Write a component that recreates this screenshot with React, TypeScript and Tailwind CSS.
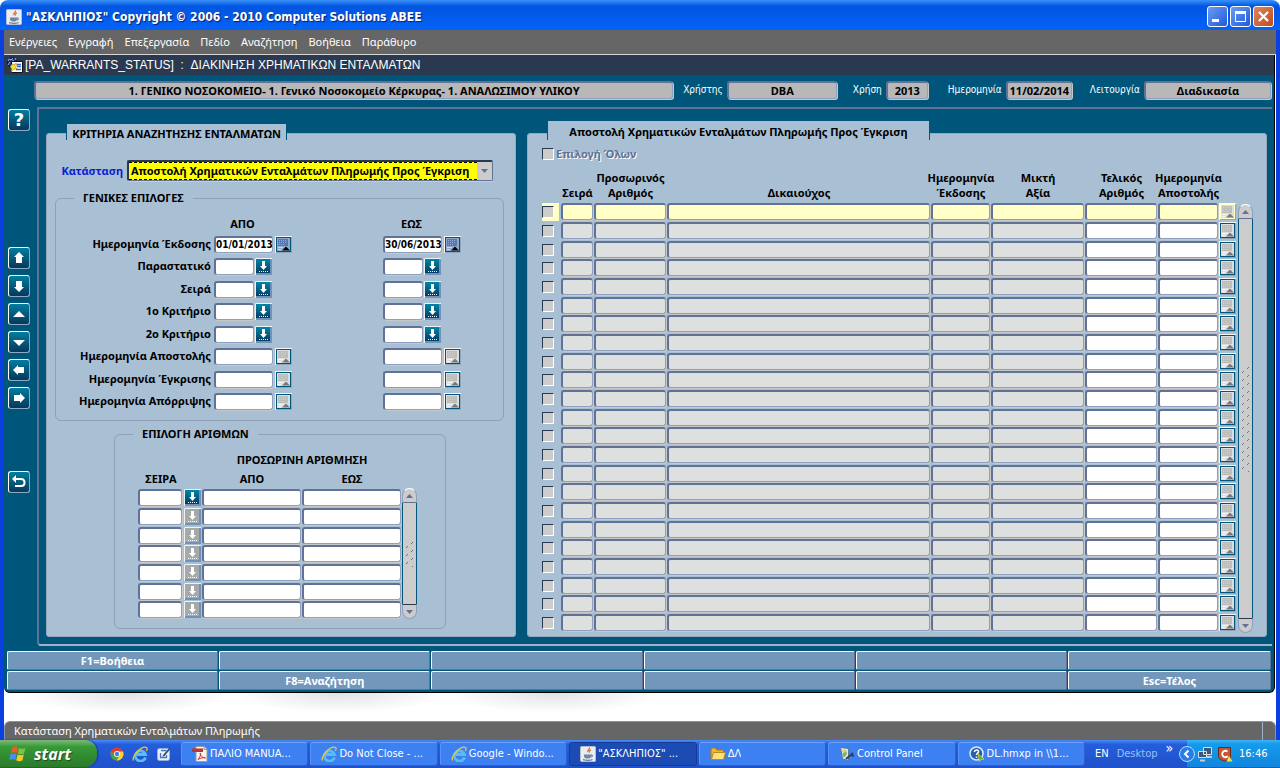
import React from "react";

type FilterRow = {
  id: string;
  label: string;
  kind: "date" | "list";
  from?: string;
  to?: string;
  active?: boolean;
};

const menuItems = ["Ενέργειες", "Εγγραφή", "Επεξεργασία", "Πεδίο", "Αναζήτηση", "Βοήθεια", "Παράθυρο"];

const filterRows: FilterRow[] = [
  { id: "issue", label: "Ημερομηνία Έκδοσης", kind: "date", from: "01/01/2013", to: "30/06/2013", active: true },
  { id: "document", label: "Παραστατικό", kind: "list" },
  { id: "series", label: "Σειρά", kind: "list" },
  { id: "criterion1", label: "1ο Κριτήριο", kind: "list" },
  { id: "criterion2", label: "2ο Κριτήριο", kind: "list" },
  { id: "sent", label: "Ημερομηνία Αποστολής", kind: "date" },
  { id: "approved", label: "Ημερομηνία Έγκρισης", kind: "date" },
  { id: "rejected", label: "Ημερομηνία Απόρριψης", kind: "date" },
];

const numberRows = Array.from({ length: 7 }, (_, i) => i);
const warrantRows = Array.from({ length: 23 }, (_, i) => i);

const warrantColumns = [
  { title: "Σειρά", width: "w-[33px]", editable: false },
  { title: "Προσωρινός Αριθμός", width: "w-[73px]", editable: false },
  { title: "Δικαιούχος", width: "", editable: false },
  { title: "Ημερομηνία Έκδοσης", width: "w-[60px]", editable: false },
  { title: "Μικτή Αξία", width: "w-[94px]", editable: false },
  { title: "Τελικός Αριθμός", width: "w-[73px]", editable: true },
  { title: "Ημερομηνία Αποστολής", width: "w-[61px]", editable: true },
];

const functionKeys = ["F1=Βοήθεια", "", "", "", "", "", "", "F8=Αναζήτηση", "", "", "", "Esc=Τέλος"];

const condensed = "font-['DejaVu_Sans_Condensed','DejaVu_Sans',sans-serif]";

const fieldEdge =
  "block border-t-2 border-l-2 border-r border-b border-t-[#607396] border-l-[#607396] border-r-[#8fa0bd] border-b-[#8fa0bd] rounded-[3px] shadow-[1px_1px_0_#c8c8c8] outline-none";

/* ---------- icons ---------- */

const JavaIcon = () => (
  <svg width="16" height="16" viewBox="0 0 16 16" className="shrink-0">
    <rect x="0.5" y="0.5" width="15" height="15" rx="1" fill="#e9edf2" stroke="#b6c0cc" />
    <path d="M9.500 1.500c1 1.600-2.800 2.600-1.600 4.600M11 4c-1.500.6-2.200 1.300-1.500 2.600" fill="none" stroke="#e0662a" strokeWidth="1.200" />
    <path d="M4 8.500h7v1.500c0 2-1.500 2.500-3.500 2.500S4 12 4 10z" fill="#6f86a3" />
    <path d="M11 9c2-.5 2 2 0 2M3 13.700c3 .8 7 .8 9.500 0" fill="none" stroke="#47617f" />
  </svg>
);

const FormIcon = () => (
  <svg width="16" height="16" viewBox="0 0 16 16" className="shrink-0">
    <circle cx="5.500" cy="5.500" r="5" fill="#1d2f70" stroke="#0b1730" />
    <path d="M1 4l1-2 2 1 2-2M8 1l1 2M1 8l2-3M5 3l2 1" fill="none" stroke="#8fb3e8" />
    <path d="M4.500 4.500h11v11h-11z" fill="#fff" stroke="#111" />
    <path d="M10 7.500h4M10 9.500h4M9 12.500h5" stroke="#3a62d8" strokeWidth="1.400" />
    <path d="M5 7l3 .5 1-1.500 1 2.500L8.500 10 10 12l-3 0-3 3 .5-3.500L3 10z" fill="#f7dc3c" stroke="#836a00" strokeWidth=".5" />
  </svg>
);

const CalendarIcon = ({ active, hot }: { active?: boolean; hot?: boolean }) => (
  <svg width="17" height="17" viewBox="0 0 17 17" className="block">
    <path d="M0 0h17v17H0z" fill="#8fa6bf" />
    <path d="M0 0h17v1H1v16H0z" fill={hot ? "#ffffe0" : "#f4f7f9"} />
    <path d="M1 1h15v15H1z" fill={hot ? "#ffffc6" : "#00567a"} />
    <path d="M2 2h13v13H2z" fill={active ? "#8fa9c6" : "#dedede"} />
    <path d="M3 3h10v7H3z" fill={active ? "#5679b4" : "#bdbdbb"} />
    <path d="M4 4.500h1m1 0h1m1 0h1m1 0h1M4 6.500h1m1 0h1m1 0h1m1 0h1M4 8.500h1m1 0h1m1 0h1" stroke={active ? "#8fabd6" : "#cfcfcd"} />
    <path d="M3 11.500h5M3 13.500h3" stroke={active ? "#c8d6e6" : "#f6f6f6"} />
    <path d="M7 14.500l4-4 4 4z" fill={active ? "#000" : "#7c7878"} />
  </svg>
);

const ListIcon = ({ active }: { active?: boolean }) => (
  <svg width="17" height="17" viewBox="0 0 17 17" className="block">
    <defs>
      <linearGradient id="listBlue" x1="0" y1="0" x2="0" y2="1">
        <stop offset="0" stopColor="#0086a8" />
        <stop offset="1" stopColor="#023c62" />
      </linearGradient>
    </defs>
    <path d="M0 0h17v17H0z" fill="#7092b8" />
    <path d="M.5 17V.5H17" fill="none" stroke="#eef3f7" />
    <path d="M1 1h14v14H1z" fill={active ? "url(#listBlue)" : "#a5aaa8"} />
    <path d="M7 3h3v5h2l-3.500 4L5 8h2z" fill="#fff" />
    <path d="M4 13.500h9" stroke="#fff" strokeDasharray="1 1" />
  </svg>
);

const InternetIcon = () => (
  <svg width="16" height="16" viewBox="0 0 16 16" className="shrink-0">
    <path d="M13.500 11.500A5.200 5.200 0 1 1 13.500 8.500H5" fill="none" stroke="#58bdf5" strokeWidth="2.800" />
    <path d="M1.500 14.500C-.5 11 9-.5 14.500 1.500c1 .6.6 2.200-.2 3.300" fill="none" stroke="#f6c531" strokeWidth="1.300" />
  </svg>
);

const ChromeIcon = () => (
  <svg width="14" height="14" viewBox="0 0 14 14">
    <circle cx="7" cy="7" r="6.500" fill="#e23b2e" />
    <path d="M1.300 4A6.500 6.500 0 0 0 6.500 13.500L9.500 8.500H4.500z" fill="#3fa648" />
    <path d="M13 4.500A6.500 6.500 0 0 1 6.500 13.500l3.500-5.500-1-3.500z" fill="#fbd331" />
    <circle cx="7" cy="7" r="3" fill="#fff" />
    <circle cx="7" cy="7" r="2.200" fill="#3f7de0" />
  </svg>
);

const DesktopIcon = () => (
  <svg width="16" height="16" viewBox="0 0 16 16">
    <rect x="1.500" y="2.500" width="12" height="12" rx="2" fill="#e9f1fb" stroke="#8fb2de" />
    <path d="M5 4.500h5.500M4.500 7v4.500h6V9" fill="none" stroke="#4a78b8" strokeWidth="1.300" />
    <path d="M7 9l6-7 1.500 1-6 7-2 .5z" fill="#37506f" />
  </svg>
);

const PdfIcon = () => (
  <svg width="16" height="16" viewBox="0 0 16 16" className="shrink-0">
    <path d="M4 .5h8l3 3v12H4z" fill="#f7f4f2" stroke="#a09a98" />
    <path d="M12 .5v3h3" fill="#dcd6d4" stroke="#a09a98" />
    <path d="M0 2.500h11v3.500H0z" fill="#b5392c" />
    <path d="M6 13.500c2-2 3-5 2.500-6.500-.8 0-.5 4 5 5-2-.8-5 0-7.500 1.500z" fill="none" stroke="#c0392b" />
  </svg>
);

const FolderIcon = () => (
  <svg width="16" height="16" viewBox="0 0 16 16" className="shrink-0">
    <path d="M1 3.500Q1 2 2.500 2h3L7 4h6.500v9.500H1z" fill="#f0b52e" stroke="#a8761a" />
    <path d="M1.500 13.500L3.500 6.500h12l-2 7z" fill="#fde27a" stroke="#b98a20" />
  </svg>
);

const ControlIcon = () => (
  <svg width="16" height="16" viewBox="0 0 16 16" className="shrink-0">
    <path d="M1.500 1.500l8 1v12l-6-1.500z" fill="#dbe9f8" stroke="#55789f" />
    <path d="M3 8l4-4 1 4-3 4z" fill="#7db36b" />
    <circle cx="5" cy="5" r="1.800" fill="#f5cf3e" />
    <path d="M7 13l7-6M12 9l3 1" stroke="#33435c" strokeWidth="2" />
  </svg>
);

const HelpFileIcon = () => (
  <svg width="16" height="16" viewBox="0 0 16 16" className="shrink-0">
    <circle cx="7.500" cy="7.500" r="6.500" fill="#2b5fae" stroke="#dfe9f5" strokeWidth="1.500" />
    <path d="M5.500 6c0-3 4.500-2.500 4 0-.3 1.200-2 1.300-2 3M7.500 10.500v1.500" fill="none" stroke="#fff" strokeWidth="1.500" />
    <path d="M9 8l6 5-3 .4-1.500 2z" fill="#4fae3a" stroke="#e7e04b" strokeWidth=".7" />
  </svg>
);

const WindowsFlag = () => (
  <svg width="19" height="18" viewBox="0 0 19 18">
    <path d="M3 2.500c2-1.200 4-1.200 6-.2L7.800 8c-2-1-4-.9-6 .2z" fill="#ef5a2a" />
    <path d="M10 3c2 1 4 1 6.500 0L15 8.600c-2 1-4 1-6.200-.1z" fill="#7fc241" />
    <path d="M1.500 9.200c2-1 4-1.100 6-.2L6.300 15c-2-1-4-.9-6 .2z" fill="#4d8df0" />
    <path d="M8.600 9.600c2 1 4 1 6.200 0l-1.500 5.800c-2 1-4 1-6-.1z" fill="#fcc62d" />
  </svg>
);

/* ---------- small parts ---------- */

const toolPaths: Record<string, string> = {
  up: "M10 4l5 5h-2v6H7V9H5z",
  down: "M10 16l-5-5h2V5h6v6h2z",
  first: "M10 7l6 6H4z",
  last: "M10 14L4 8h12z",
  left: "M4 10l5-5v2h6v6H9v2z",
  right: "M16 10l-5-5v2H5v6h6v2z",
};

const ToolButton = ({ name, children }: { name: string; children?: React.ReactNode }) => (
  <button
    aria-label={name}
    className="flex h-[22px] w-[22px] items-center justify-center rounded-[3px] border border-t-white border-l-white border-r-[#8fa9c2] border-b-[#8fa9c2] bg-linear-to-b from-[#007d9e] to-[#06395c] text-white"
  >
    {children ?? (
      <svg width="20" height="20" viewBox="0 0 20 20" className="shrink-0">
        <path d={toolPaths[name]} fill="#fff" />
      </svg>
    )}
  </button>
);

const InfoField = ({ label, value, className }: { label: string; value: string; className: string }) => (
  <label className="flex items-center gap-1 whitespace-nowrap text-white">
    <span className={`${condensed} text-[10px]`}>{label}</span>
    <input
      readOnly
      defaultValue={value}
      className={`${fieldEdge} h-[18px] bg-[#b8b8b8] text-center font-bold text-black ${className}`}
    />
  </label>
);

const Grip = ({ id, height }: { id: string; height: number }) => (
  <svg width="8" height={height}>
    <pattern id={id} width="8" height="8" patternUnits="userSpaceOnUse">
      <path d="M5 3l2-2M0 7l2-2" stroke="#607396" />
    </pattern>
    <rect width="8" height={height} fill={`url(#${id})`} />
  </svg>
);

const ScrollBar = ({ id, className, grip }: { id: string; className: string; grip: number }) => (
  <div className={`flex w-[15px] flex-col ${className}`}>
    <button
      aria-label="Πάνω"
      className="flex h-[15px] items-center justify-center rounded-t-full border border-[#8fa0b8] border-t-white border-b-[#607396] bg-[#ccc]"
    >
      <svg width="7" height="4" viewBox="0 0 7 4">
        <path d="M0 4l3.500-4L7 4z" fill="#607396" />
      </svg>
    </button>
    <div className="flex flex-1 items-center justify-center border-x border-[#00567a] bg-[#ccc]">
      <Grip id={`${id}-grip`} height={grip} />
    </div>
    <button
      aria-label="Κάτω"
      className="flex h-[15px] items-center justify-center rounded-b-full border border-[#8fa0b8] border-t-[#2a3950] bg-[#ccc]"
    >
      <svg width="7" height="4" viewBox="0 0 7 4">
        <path d="M0 0l3.500 4L7 0z" fill="#607396" />
      </svg>
    </button>
  </div>
);

const Checkbox = ({ id, label, disabled }: { id: string; label?: string; disabled?: boolean }) => (
  <input
    id={id}
    type="checkbox"
    aria-label={label}
    disabled={disabled}
    className="block h-3 w-3 appearance-none border border-t-[#2a3950] border-l-[#2a3950] border-r-white border-b-white bg-[#ccc]"
  />
);

const FilterField = ({ row, side }: { row: FilterRow; side: "from" | "to" }) => {
  const isDate = row.kind === "date";
  return (
    <div className={`flex items-center ${isDate ? "gap-0.5" : "gap-px"}`}>
      <input
        id={`${row.id}-${side}`}
        aria-label={`${row.label} ${side === "from" ? "ΑΠΟ" : "ΕΩΣ"}`}
        defaultValue={row[side]}
        className={`${fieldEdge} ${condensed} h-[17px] bg-white text-[10px] font-bold ${isDate ? "w-[59px]" : "w-[40px]"}`}
      />
      <button aria-label={`Επιλογή ${row.label}`}>
        {isDate ? <CalendarIcon active={row.active} /> : <ListIcon active />}
      </button>
    </div>
  );
};

/* ---------- panels ---------- */

const CriteriaPanel = () => (
  <section className="w-[470px] shrink-0 rounded-[3px] border border-[#97a8bf] bg-[#a9bfd3]">
    <h2 className="-mt-[10px] ml-[19px] flex h-4 w-[221px] items-center justify-center border-x border-[#00567a] bg-[#a9bfd3] pt-1 whitespace-nowrap">
      ΚΡΙΤΗΡΙΑ ΑΝΑΖΗΤΗΣΗΣ ΕΝΤΑΛΜΑΤΩΝ
    </h2>

    <div className="mt-5 mr-[22px] flex h-[21px] items-center gap-1">
      <label htmlFor="status" className="w-[76px] text-right text-[#0a1ed2]">
        Κατάσταση
      </label>
      <div className="flex h-[21px] flex-1 rounded-[2px] border-t-2 border-l-2 border-r border-b border-t-[#2a3950] border-l-[#2a3950] border-[#607396] bg-[#ccc] shadow-[0_1px_0_#ccc]">
        <select
          id="status"
          className="min-w-0 flex-1 appearance-none border-y border-dashed border-black bg-[#ffff00] pl-0.5 font-bold text-black outline-none"
        >
          <option>Αποστολή Χρηματικών Ενταλμάτων Πληρωμής Προς Έγκριση</option>
        </select>
        <span className="flex w-[15px] items-center justify-center">
          <svg width="7" height="4" viewBox="0 0 7 4">
            <path d="M0 0l3.500 4L7 0z" fill="#607396" />
          </svg>
        </span>
      </div>
    </div>

    <fieldset className="mt-[9px] mr-[11px] ml-2 rounded-md border border-[#8fa0b8] pb-2">
      <legend className="ml-[18px] h-4 px-[9px] leading-4">ΓΕΝΙΚΕΣ ΕΠΙΛΟΓΕΣ</legend>
      <div className="mt-[10px] grid grid-cols-[155px_166px_1fr] gap-x-[3px] leading-4">
        <span />
        <span className="w-[57px] text-center">ΑΠΟ</span>
        <span className="w-[57px] text-center">ΕΩΣ</span>
      </div>
      {filterRows.map((row) => (
        <div key={row.id} className="grid h-[22px] grid-cols-[155px_166px_1fr] items-center gap-x-[3px] odd:mt-px">
          <label htmlFor={`${row.id}-from`} className="text-right whitespace-nowrap">
            {row.label}
          </label>
          <FilterField row={row} side="from" />
          <FilterField row={row} side="to" />
        </div>
      ))}
    </fieldset>

    <fieldset className="mt-[5px] ml-[67px] w-[332px] rounded-md border border-[#8fa0b8] pb-[9px]">
      <legend className="ml-[18px] h-4 px-[9px] leading-4">ΕΠΙΛΟΓΗ ΑΡΙΘΜΩΝ</legend>
      <div className="mt-[9px] ml-[23px] flex items-end">
        <table className="w-[264px] table-fixed border-collapse">
          <colgroup>
            <col className="w-[46px]" />
            <col className="w-[18px]" />
            <col />
            <col />
          </colgroup>
          <thead>
            <tr className="h-[18px] leading-4">
              <td colSpan={2} />
              <th colSpan={2} className="whitespace-nowrap">
                ΠΡΟΣΩΡΙΝΗ ΑΡΙΘΜΗΣΗ
              </th>
            </tr>
            <tr className="h-[19px] leading-4">
              <th>ΣΕΙΡΑ</th>
              <td />
              <th>ΑΠΟ</th>
              <th>ΕΩΣ</th>
            </tr>
          </thead>
          <tbody>
            {numberRows.map((i) => (
              <tr key={i} className="h-[19px] nth-[3n]:h-[18px]">
                <td className="p-0 pr-0.5">
                  <input aria-label={`Σειρά ${i + 1}`} className={`${fieldEdge} h-[17px] w-full bg-white`} />
                </td>
                <td className="p-0">
                  <button aria-label={`Λίστα σειρών ${i + 1}`} className="block">
                    <ListIcon active={i === 0} />
                  </button>
                </td>
                <td className="p-0 pr-px">
                  <input aria-label={`Από ${i + 1}`} className={`${fieldEdge} h-[17px] w-full bg-white`} />
                </td>
                <td className="p-0 pr-px">
                  <input aria-label={`Έως ${i + 1}`} className={`${fieldEdge} h-[17px] w-full bg-white`} />
                </td>
              </tr>
            ))}
          </tbody>
        </table>
        <ScrollBar id="numbers" className="h-[131px]" grip={26} />
      </div>
    </fieldset>
  </section>
);

const WarrantsPanel = () => (
  <section className="min-w-0 flex-1 rounded-[3px] border border-[#97a8bf] bg-[#a9bfd3] pb-[3px]">
    <h2 className="-mt-[13px] ml-[19px] flex h-[19px] w-[383px] items-center justify-center border-x border-[#00567a] bg-[#a9bfd3] pt-0.5 whitespace-nowrap">
      Αποστολή Χρηματικών Ενταλμάτων Πληρωμής Προς Έγκριση
    </h2>

    <div className="mt-[6px] ml-[14px] flex h-4 items-center gap-0.5 text-[#607396]">
      <Checkbox id="select-all" disabled />
      <label htmlFor="select-all" className="[text-shadow:1px_1px_0_#fff]">
        Επιλογή Όλων
      </label>
    </div>

    <div className="mt-2 mr-[13px] ml-[14px] flex items-end gap-0.5">
      <table className="w-full min-w-0 table-fixed border-collapse">
        <colgroup>
          <col className="w-[19px]" />
          {warrantColumns.map((col) => (
            <col key={col.title} className={col.width} />
          ))}
          <col className="w-[17px]" />
        </colgroup>
        <thead>
          <tr className="h-[33px]">
            <td />
            {warrantColumns.map((col) => (
              <th key={col.title} className="p-0 pb-[3px] align-bottom leading-[15px]">
                <span className="flex justify-center">
                  <span className="w-min shrink-0 text-center">{col.title}</span>
                </span>
              </th>
            ))}
            <td />
          </tr>
        </thead>
        <tbody>
          {warrantRows.map((i) => (
            <tr key={i} className="h-[19px] align-top nth-[3n]:h-[18px]">
              <td className="p-0">
                <div className={`flex h-[18px] w-[17px] items-center ${i === 0 ? "bg-[#ffffc6]" : ""}`}>
                  <Checkbox id={`row-${i}`} label={`Γραμμή ${i + 1}`} />
                </div>
              </td>
              {warrantColumns.map((col) => (
                <td key={col.title} className="p-0 pr-px">
                  <input
                    aria-label={`${col.title} ${i + 1}`}
                    readOnly={!col.editable}
                    className={`${fieldEdge} h-[17px] w-full ${
                      i === 0 ? "bg-[#ffffc6]" : col.editable ? "bg-white" : "bg-[#dde0de]"
                    }`}
                  />
                </td>
              ))}
              <td className="p-0">
                <button aria-label={`Ημερολόγιο ${i + 1}`} className="block">
                  <CalendarIcon hot={i === 0} />
                </button>
              </td>
            </tr>
          ))}
        </tbody>
      </table>
      <ScrollBar id="warrants" className="h-[429px] shrink-0" grip={106} />
    </div>
  </section>
);

/* ---------- taskbar ---------- */

const tasks = [
  { title: "ΠΑΛΙΟ MANUA...", icon: <PdfIcon /> },
  { title: "Do Not Close - ...", icon: <InternetIcon /> },
  { title: "Google - Windo...", icon: <InternetIcon /> },
  { title: '"ΑΣΚΛΗΠΙΟΣ" ...', icon: <JavaIcon />, active: true },
  { title: "ΔΛ", icon: <FolderIcon /> },
  { title: "Control Panel", icon: <ControlIcon /> },
  { title: "DL.hmxp in \\\\1...", icon: <HelpFileIcon /> },
];

const Taskbar = () => (
  <footer
    className={`${condensed} flex h-[29px] items-stretch bg-linear-to-b from-[#4a8df5] via-[#245edb] via-15% to-[#1f50c8] pb-0.5 text-[11px] text-white`}
  >
    <button className="flex w-[97px] items-center gap-1.5 rounded-r-xl bg-linear-to-b from-[#7cb87a] via-[#369a36] via-25% to-[#2b7a2b] pl-[9px] shadow-[1px_0_2px_#12399a]">
      <WindowsFlag />
      <span className="font-['Open_Sans',sans-serif] text-base leading-4 font-bold italic [text-shadow:1px_1px_1px_#1c4a1c]">
        start
      </span>
    </button>
    <div className="flex w-[84px] items-center gap-2 pl-[13px]">
      <button aria-label="Chrome">
        <ChromeIcon />
      </button>
      <button aria-label="Internet Explorer">
        <InternetIcon />
      </button>
      <button aria-label="Επιφάνεια εργασίας">
        <DesktopIcon />
      </button>
    </div>
    <div className="flex flex-1 items-center gap-0.5">
      {tasks.map((task) => (
        <button
          key={task.title}
          className={`flex h-6 min-w-0 flex-1 items-center gap-0.5 rounded-[3px] border pl-2.5 whitespace-nowrap ${
            task.active
              ? "border-[#153c94] bg-[#1c4bb4]"
              : "border-[#2a60d0] border-t-[#6ba2fb] border-l-[#5a93f8] bg-[#3c80f2]"
          }`}
        >
          {task.icon}
          <span className="truncate">{task.title}</span>
        </button>
      ))}
    </div>
    <div className="flex w-[102px] items-center pl-[10px]">
      <span>EN</span>
      <span className="ml-2 text-[#9cc0f8]">Desktop</span>
      <span className="ml-2 self-start text-sm leading-4">»</span>
    </div>
    <div className="flex w-[93px] items-center bg-linear-to-b from-[#3db2f5] via-[#149bec] via-15% to-[#1285dc]">
      <button aria-label="Εμφάνιση εικονιδίων" className="-ml-2">
        <svg width="16" height="16" viewBox="0 0 16 16">
          <circle cx="8" cy="8" r="7.500" fill="#2a7de6" stroke="#b8dcfa" />
          <path d="M9.500 4.500L6 8l3.500 3.500" fill="none" stroke="#fff" strokeWidth="2" />
        </svg>
      </button>
      <svg width="16" height="16" viewBox="0 0 16 16" className="ml-0.5">
        <path d="M6.500 1.500h8v7h-8zM1.500 5.500h8v6h-8z" fill="#3b5878" stroke="#d8dee6" />
        <path d="M3 14.500h5M10 11h5" stroke="#c7ccd4" strokeWidth="2" />
      </svg>
      <svg width="16" height="16" viewBox="0 0 16 16" className="ml-1">
        <path d="M1.500 1.500h12v9c0 2-3 4-6 4.500-3-.5-6-2.500-6-4.500z" fill="#c4572e" stroke="#6b2b18" />
        <path d="M10.500 5.500c-5-3-7 4-3.500 5.500 1.500.5 3 0 3.500-1" fill="none" stroke="#fff" strokeWidth="1.800" />
        <path d="M12 10l3.500 5.500h-6z" fill="#f8e23c" />
      </svg>
      <time className="ml-1.5">16:46</time>
    </div>
  </footer>
);

const TitleBar = () => (
  <header className="flex h-[30px] items-center rounded-t-lg bg-linear-to-b from-[#3a91f8] via-[#0255e0] via-20% to-[#0463f8] pt-[3px] pr-[6px] pl-[6px]">
    <JavaIcon />
    <h1
      className={`${condensed} ml-1 flex-1 text-xs font-bold whitespace-nowrap text-white [text-shadow:1px_1px_1px_#0a1f70]`}
    >
      "ΑΣΚΛΗΠΙΟΣ" Copyright © 2006 - 2010 Computer Solutions ABEE
    </h1>
    <div className="flex gap-0.5">
      <button
        aria-label="Ελαχιστοποίηση"
        className="h-[21px] w-[21px] rounded-[3px] border border-white bg-linear-to-br from-[#6a9cf4] to-[#2058d8]"
      >
        <svg width="19" height="19" viewBox="0 0 19 19">
          <path d="M4 12h7v3H4z" fill="#fff" />
        </svg>
      </button>
      <button
        aria-label="Μεγιστοποίηση"
        className="h-[21px] w-[21px] rounded-[3px] border border-white bg-linear-to-br from-[#6a9cf4] to-[#2058d8]"
      >
        <svg width="19" height="19" viewBox="0 0 19 19">
          <path d="M4.500 4.500h10v10h-10z" fill="none" stroke="#fff" />
          <path d="M4 5.500h11" stroke="#fff" strokeWidth="3" />
        </svg>
      </button>
      <button
        aria-label="Κλείσιμο"
        className="h-[21px] w-[21px] rounded-[3px] border border-white bg-linear-to-br from-[#dd8560] to-[#c04a18]"
      >
        <svg width="19" height="19" viewBox="0 0 19 19">
          <path d="M5 5l9 9M14 5l-9 9" stroke="#fff" strokeWidth="2.200" />
        </svg>
      </button>
    </div>
  </header>
);

const App: React.FC = () => {
  return (
    <div className="flex min-h-screen flex-col bg-white font-['Noto_Sans',sans-serif] text-[11px] leading-4">
      <TitleBar />
      <div className="flex flex-1 flex-col border-x-4 border-[#0a3fe0] bg-white">
        <nav className="flex h-[25px] items-center gap-[11px] border-b border-[#d6d6d6] bg-[#666] pl-[5px] text-white">
          {menuItems.map((item) => (
            <button key={item}>{item}</button>
          ))}
        </nav>

        <main className="mr-px flex flex-col rounded-b-md border-r border-b border-black bg-[#00567a] pb-0.5 font-bold text-black">
          <div className="flex h-5 items-center gap-0.5 bg-[#2a3950] pl-[3px] font-['Liberation_Sans',sans-serif] text-xs font-normal whitespace-pre text-white">
            <FormIcon />
            <span>[PA_WARRANTS_STATUS]  :  ΔΙΑΚΙΝΗΣΗ ΧΡΗΜΑΤΙΚΩΝ ΕΝΤΑΛΜΑΤΩΝ</span>
          </div>

          <div className="mt-[5px] mr-[3px] ml-[30px] flex h-[19px] items-center gap-[10px] font-normal">
            <input
              readOnly
              aria-label="Μονάδα"
              defaultValue="1. ΓΕΝΙΚΟ ΝΟΣΟΚΟΜΕΙΟ- 1. Γενικό Νοσοκομείο Κέρκυρας- 1. ΑΝΑΛΩΣΙΜΟΥ ΥΛΙΚΟΥ"
              className={`${fieldEdge} h-[18px] min-w-0 flex-1 bg-[#b8b8b8] text-center font-bold text-black`}
            />
            <InfoField label="Χρήστης" value="DBA" className="mr-1.5 w-[110px]" />
            <InfoField label="Χρήση" value="2013" className="mr-[10px] w-[42px]" />
            <InfoField label="Ημερομηνία" value="11/02/2014" className="mr-2 w-[66px]" />
            <InfoField label="Λειτουργία" value="Διαδικασία" className="w-[127px]" />
          </div>

          <div className="mt-2 mr-0.5 flex">
            <div className="flex w-[33px] shrink-0 flex-col gap-1.5 pt-0.5 pl-1">
              <ToolButton name="help">
                <span className="font-['DejaVu_Sans',sans-serif] text-lg leading-4">?</span>
              </ToolButton>
              <div className="mt-[110px] flex flex-col gap-1.5">
                {["up", "down", "first", "last", "left", "right"].map((name) => (
                  <ToolButton key={name} name={name} />
                ))}
              </div>
              <div className="mt-14">
                <ToolButton name="return">
                  <svg width="20" height="20" viewBox="0 0 20 20" className="shrink-0">
                    <path d="M7 7h5q3.500 0 3.500 3.500T12 14H6" fill="none" stroke="#fff" strokeWidth="2" />
                    <path d="M3 7l4-4v8z" fill="#fff" />
                  </svg>
                </ToolButton>
              </div>
            </div>

            <div className="flex min-w-0 flex-1 gap-[11px] rounded-bl-sm border-t-2 border-b-2 border-l-2 border-t-[#607396] border-b-[#9fb0c8] border-l-[#607396] pt-6 pr-[5px] pb-[7px] pl-[7px]">
              <CriteriaPanel />
              <WarrantsPanel />
            </div>
          </div>

          <div className="mt-[5px] mr-[3px] ml-[3px] grid grid-cols-[repeat(5,211fr)_203fr] gap-px">
            {functionKeys.map((key, i) => (
              <button
                key={i}
                aria-label={key || `Πλήκτρο ${i + 1}`}
                className="h-[19px] rounded-[2px] border border-t-white border-l-white border-r-[#607396] border-b-[#607396] bg-[#7397bb] leading-4 text-white"
              >
                {key}
              </button>
            ))}
          </div>
        </main>

        {/* Soft shadows under the form window */}
        <div className="flex min-h-7 flex-1 items-start">
          <div className="ml-4 h-5 w-[640px] bg-[radial-gradient(ellipse_at_top,#e2e2e2,transparent_70%)] bg-[length:213px_20px]" />
        </div>

        <div className="flex h-[19px] items-center rounded-t-md border border-b-0 border-[#8a93a3] bg-[#666] pl-[9px] text-white">
          <span className="flex-1">Κατάσταση Χρηματικών Ενταλμάτων Πληρωμής</span>
          <span className="mr-3 h-full border-l border-[#9fb0c8]" />
        </div>
      </div>
      <Taskbar />
    </div>
  );
};

export default App;
